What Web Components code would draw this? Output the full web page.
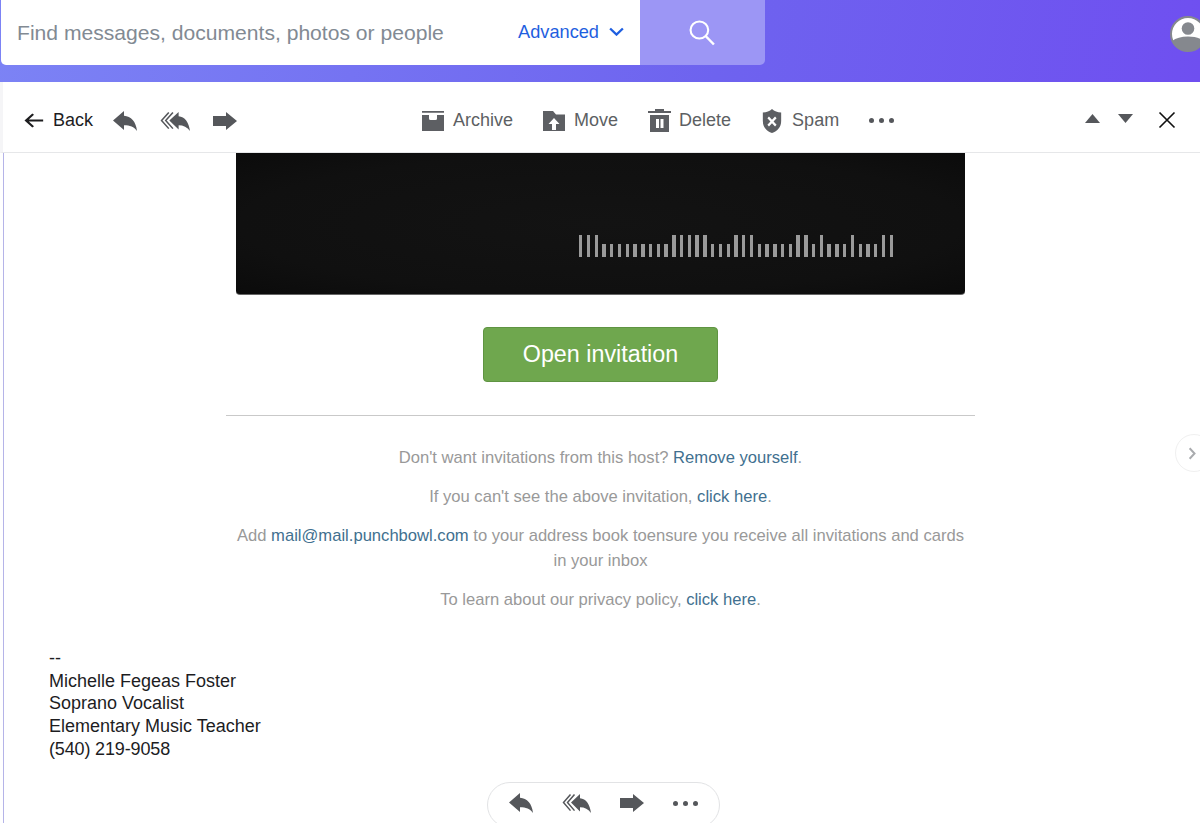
<!DOCTYPE html>
<html>
<head>
<meta charset="utf-8">
<title>Mail</title>
<style>
    html, body {
        margin: 0;
        height: 823px;
        overflow: hidden;
        background: #fff;
        font-family: "Liberation Sans", Arial, sans-serif;
    }
</style>
</head>
<body>
<mail-page></mail-page>

<script>
const REPLY = "M0 10 11 0V5C18 5.500 23 11 24 21 21 16.500 17 15 11 15V20Z";

const ICONS = {
    back: `<path d="M23 12H2.500M11 3 2.500 12l8.500 9" fill="none" stroke="currentColor" stroke-width="2.800"/>`,
    reply: `<path d="${REPLY}"/>`,
    replyAll: `<path d="M8.500 1.500 1.500 10l7 8.500M12.500 1.500 5.500 10l7 8.500" fill="none" stroke="currentColor" stroke-width="1.500"/><path d="M9 10 18 1V5.500C24 6 28 12 29 21 26.500 17 22.500 15 18 15V19.500Z"/>`,
    forward: `<path d="M0 4H13V0L24 9 13 18V14H0Z"/>`,
    archive: `<path d="M0 0H22V1.800H0ZM0 4H7V7.500Q7 9 8.500 9H13.500Q15 9 15 7.500V4H22V20H0Z"/>`,
    move: `<path fill-rule="evenodd" d="M0 0H10L13 3.500H22V20H0ZM11 7 5.500 13H9V19H13V13H16.500Z"/>`,
    trash: `<path fill-rule="evenodd" d="M7 0H16V2H23V4H0V2H7ZM2 6H21V23H2ZM8 10V19H11V10ZM12.500 10V19H15.500V10Z"/>`,
    spam: `<path fill-rule="evenodd" d="M12 0c2.500 2.300 6 3.400 10 3.500v8.500c0 6-4 10-10 12C6 22 2 18 2 12V3.500C6 3.400 9.500 2.300 12 0zM8.700 7.500 7 9.200l3.300 3.300L7 15.800l1.700 1.700 3.300-3.300 3.300 3.300 1.700-1.700-3.300-3.300L17 9.200l-1.700-1.700-3.300 3.300z"/>`,
    up: `<path d="M12 0 24 24H0z"/>`,
    down: `<path d="M0 0h24L12 24z"/>`,
    close: `<path d="M2 2l20 20M22 2 2 22" fill="none" stroke="currentColor" stroke-width="2.200"/>`,
    search: `<circle cx="10" cy="10" r="8.500" fill="none" stroke="currentColor" stroke-width="2"/><path d="M16 16l8 8.500" fill="none" stroke="currentColor" stroke-width="2.400"/>`,
    chevron: `<path d="M1.500 2 10 10 18.500 2" fill="none" stroke="currentColor" stroke-width="3.200"/>`,
    side: `<path d="M2 1.500 8 8l-6 6.500" fill="none" stroke="currentColor" stroke-width="2.400"/>`,
};

// viewBox per icon, everything else is 24x24
const BOXES = {
    reply: "0 0 24 21",
    replyAll: "0 0 29 21",
    forward: "0 0 24 18",
    archive: "0 0 22 20",
    move: "0 0 22 20",
    trash: "0 0 23 23",
    chevron: "0 0 20 12",
    side: "0 0 11 16",
    search: "0 0 26 26",
};

class MailIcon extends HTMLElement {
    connectedCallback() {
        const name = this.getAttribute("name");
        const w = this.getAttribute("w") || 24;
        const h = this.getAttribute("h") || w;
        if (!this.shadowRoot) this.attachShadow({ mode: "open" });
        this.shadowRoot.innerHTML = `
            <style>
                :host { display: inline-flex; flex: none; }
                svg { display: block; fill: currentColor; }
            </style>
            <svg width="${w}" height="${h}" viewBox="${BOXES[name] || "0 0 24 24"}" preserveAspectRatio="none">${ICONS[name]}</svg>`;
    }
}

const searchBarTemplate = document.createElement("template");
searchBarTemplate.innerHTML = `
    <style>
        :host {
            display: flex;
            height: 82px;
            background: linear-gradient(100deg, #7c83f5 0%, #6e63ef 60%, #6f4ff0 100%);
            box-sizing: border-box;
            padding-left: 1px;
            align-items: flex-start;
        }
        .box {
            width: 639px;
            height: 65px;
            box-sizing: border-box;
            background: #fff;
            border-radius: 0 0 0 5px;
            display: flex;
            align-items: center;
            padding: 0 16px;
            font-size: 21.100px;
        }
        .hint { color: #828a93; flex: 1; }
        .adv { color: #1f5fe0; font-size: 18.200px; margin-right: 10px; }
        .chev { color: #1f5fe0; display: flex; margin-top: -2px; }
        .go {
            width: 125px;
            height: 65px;
            background: #9c96f5;
            border-radius: 0 0 5px 0;
            color: #fff;
            display: flex;
            align-items: center;
            justify-content: center;
        }
        .avatar {
            margin: 16px -6px 0 auto;
            width: 36px;
            height: 36px;
        }
    </style>
    <div class="box">
        <span class="hint">Find messages, documents, photos or people</span>
        <span class="adv">Advanced</span>
        <span class="chev"><mail-icon name="chevron" w="15" h="9"></mail-icon></span>
    </div>
    <div class="go"><mail-icon name="search" w="27" h="26"></mail-icon></div>
    <svg class="avatar" viewBox="0 0 36 36">
        <circle cx="18" cy="18" r="17" fill="#fff" stroke="#85888e" stroke-width="2"/>
        <circle cx="18" cy="12.500" r="6.300" fill="#85888e"/>
        <path d="M2 25c4-3 9-4.500 16-4.500s12 1.500 16 4.500c-3 7-9 10-16 10s-13-3-16-10z" fill="#85888e"/>
    </svg>
`;

class SearchBar extends HTMLElement {
    constructor() {
        super();
        this.attachShadow({ mode: "open" });
        this.shadowRoot.appendChild(searchBarTemplate.content.cloneNode(true));
    }
}

const toolButtonTemplate = document.createElement("template");
toolButtonTemplate.innerHTML = `
    <style>
        :host {
            display: inline-flex;
            align-items: center;
            gap: 9px;
            font-size: 18px;
            color: #5d5f63;
        }
    </style>
    <slot name="icon"></slot><slot></slot>
`;

class ToolButton extends HTMLElement {
    constructor() {
        super();
        this.attachShadow({ mode: "open" });
        this.shadowRoot.appendChild(toolButtonTemplate.content.cloneNode(true));
    }
}

class DotsIcon extends HTMLElement {
    constructor() {
        super();
        this.attachShadow({ mode: "open" }).innerHTML = `
            <style>
                :host { display: inline-flex; gap: 5px; }
                i { width: 5px; height: 5px; border-radius: 50%; background: #55575b; }
            </style>
            <i></i><i></i><i></i>`;
    }
}

const toolbarTemplate = document.createElement("template");
toolbarTemplate.innerHTML = `
    <style>
        :host {
            display: flex;
            align-items: center;
            height: 71px;
            box-sizing: border-box;
            padding: 7px 24px 0 21px;
            border-left: 3px solid #f5f5f7;
            border-bottom: 1px solid #e6e7e9;
            color: #55575b;
        }
        .back { color: #1d1d1f; gap: 9px; margin-right: 20px; }
        .reply { margin-right: 23px; }
        .replyall { margin-right: 23px; }
        .fwd { margin-right: 185px; }
        .mid { margin-right: 30px; }
        .del { gap: 8px; }
        .nav { margin-left: auto; display: flex; align-items: center; }
        .up { margin: -5px 18px 0 0; }
        .down { margin: -5px 25px 0 0; }
        .x { color: #111; margin-top: -1px; }
    </style>
    <tool-button class="back"><mail-icon slot="icon" name="back" w="20" h="17"></mail-icon>Back</tool-button>
    <mail-icon class="reply" name="reply" w="24" h="20"></mail-icon>
    <mail-icon class="replyall" name="replyAll" w="30" h="20"></mail-icon>
    <mail-icon class="fwd" name="forward" w="24" h="18"></mail-icon>
    <tool-button class="mid"><mail-icon slot="icon" name="archive" w="22" h="20"></mail-icon>Archive</tool-button>
    <tool-button class="mid"><mail-icon slot="icon" name="move" w="22" h="20"></mail-icon>Move</tool-button>
    <tool-button class="mid del"><mail-icon slot="icon" name="trash" w="23" h="23"></mail-icon>Delete</tool-button>
    <tool-button class="mid"><mail-icon slot="icon" name="spam" w="22" h="24"></mail-icon>Spam</tool-button>
    <dots-icon></dots-icon>
    <div class="nav">
        <mail-icon class="up" name="up" w="15" h="9"></mail-icon>
        <mail-icon class="down" name="down" w="15" h="9"></mail-icon>
        <mail-icon class="x" name="close" w="18"></mail-icon>
    </div>
`;

class MailToolbar extends HTMLElement {
    constructor() {
        super();
        this.attachShadow({ mode: "open" });
        this.shadowRoot.appendChild(toolbarTemplate.content.cloneNode(true));
    }
}

class InviteCard extends HTMLElement {
    constructor() {
        super();
        // t = tall bar, s = short bar
        const pattern = "ttt" + "sssssssss" + "ttttt" + "sss" + "ttt" + "sssss" + "tt" + "s" + "t" + "sss" + "t" + "sss" + "tt";
        const bars = [...pattern].map((b) => `<i class="${b}"></i>`).join("");
        this.attachShadow({ mode: "open" }).innerHTML = `
            <style>
                :host {
                    display: block;
                    width: 729px;
                    height: 142px;
                    margin: 0 auto;
                    box-sizing: border-box;
                    background: radial-gradient(ellipse at center, #131313 0%, #101010 70%, #0b0b0b 100%);
                    border-radius: 0 0 4px 4px;
                    border-bottom: 1px solid #666;
                    padding: 82px 72px 0 0;
                }
                .bars {
                    display: flex;
                    justify-content: flex-end;
                    align-items: flex-end;
                    height: 22px;
                    gap: 4.390px;
                }
                i { width: 3.400px; background: #9a9a9a; display: block; }
                .t { height: 22px; }
                .s { height: 13px; }
            </style>
            <div class="bars">${bars}</div>`;
    }
}

class InviteButton extends HTMLElement {
    constructor() {
        super();
        this.attachShadow({ mode: "open" }).innerHTML = `
            <style>
                :host {
                    display: flex;
                    align-items: center;
                    justify-content: center;
                    width: 235px;
                    height: 55px;
                    margin: 32px auto 0;
                    box-sizing: border-box;
                    background: #6fa74e;
                    border: 1px solid #5f9442;
                    border-radius: 4px;
                    color: #fff;
                    font-size: 23.300px;
                }
            </style>
            <slot></slot>`;
    }
}

class InviteFooter extends HTMLElement {
    constructor() {
        super();
        this.attachShadow({ mode: "open" }).innerHTML = `
            <style>
                :host {
                    display: block;
                    width: 749px;
                    margin: 33px auto 0;
                    padding-top: 29px;
                    border-top: 1px solid #c9c9c9;
                    color: #999;
                    font-size: 16.600px;
                    line-height: 25px;
                    text-align: center;
                }
                ::slotted(p) { margin: 0 0 14px; }
            </style>
            <slot></slot>`;
    }
}

class MailSignature extends HTMLElement {
    constructor() {
        super();
        this.attachShadow({ mode: "open" }).innerHTML = `
            <style>
                :host {
                    display: block;
                    margin: 35px 0 0 45px;
                    color: #1d1d1f;
                    font-size: 18px;
                    line-height: 22.700px;
                }
            </style>
            <slot></slot>`;
    }
}

class ReplyPill extends HTMLElement {
    constructor() {
        super();
        this.attachShadow({ mode: "open" }).innerHTML = `
            <style>
                :host {
                    display: flex;
                    align-items: center;
                    box-sizing: border-box;
                    width: 233px;
                    height: 46px;
                    margin: 21px 0 0 483px;
                    padding: 0 21px 3px;
                    gap: 29px;
                    border: 1px solid #e2e3e5;
                    border-radius: 23px;
                    color: #55575b;
                }
            </style>
            <mail-icon name="reply" w="24" h="20"></mail-icon>
            <mail-icon name="replyAll" w="29" h="20"></mail-icon>
            <mail-icon name="forward" w="24" h="18"></mail-icon>
            <dots-icon></dots-icon>`;
    }
}

const pageTemplate = document.createElement("template");
pageTemplate.innerHTML = `
    <style>
        :host { display: block; height: 823px; overflow: hidden; position: relative; }
        .body {
            margin-left: 3px;
            padding-right: 3px;
            border-left: 1px solid #b5b4e8;
            height: 670px;
        }
        a { color: #41708f; text-decoration: none; }
        .phone { letter-spacing: -0.150px; }
        .side {
            position: absolute;
            left: 1175px;
            top: 434px;
            width: 38px;
            height: 38px;
            box-sizing: border-box;
            border: 1px solid #f0f0f0;
            border-radius: 50%;
            background: #fff;
            display: flex;
            align-items: center;
            padding-left: 12px;
            color: #a9abae;
        }
    </style>
    <search-bar></search-bar>
    <mail-toolbar></mail-toolbar>
    <div class="body">
        <invite-card></invite-card>
        <invite-button>Open invitation</invite-button>
        <invite-footer>
            <p>Don't want invitations from this host? <a>Remove yourself</a>.</p>
            <p>If you can't see the above invitation, <a>click here</a>.</p>
            <p>Add <a>mail@mail.punchbowl.com</a> to your address book toensure you receive all invitations and cards<br>in your inbox</p>
            <p>To learn about our privacy policy, <a>click here</a>.</p>
        </invite-footer>
        <mail-signature>--<br>Michelle Fegeas Foster<br>Soprano Vocalist<br>Elementary Music Teacher<br><span class="phone">(540) 219-9058</span></mail-signature>
        <reply-pill></reply-pill>
    </div>
    <div class="side"><mail-icon name="side" w="9" h="13"></mail-icon></div>
`;

class MailPage extends HTMLElement {
    constructor() {
        super();
        this.attachShadow({ mode: "open" });
        this.shadowRoot.appendChild(pageTemplate.content.cloneNode(true));
    }
}

customElements.define("mail-icon", MailIcon);
customElements.define("search-bar", SearchBar);
customElements.define("tool-button", ToolButton);
customElements.define("dots-icon", DotsIcon);
customElements.define("mail-toolbar", MailToolbar);
customElements.define("invite-card", InviteCard);
customElements.define("invite-button", InviteButton);
customElements.define("invite-footer", InviteFooter);
customElements.define("mail-signature", MailSignature);
customElements.define("reply-pill", ReplyPill);
customElements.define("mail-page", MailPage);
</script>
</body>
</html>
